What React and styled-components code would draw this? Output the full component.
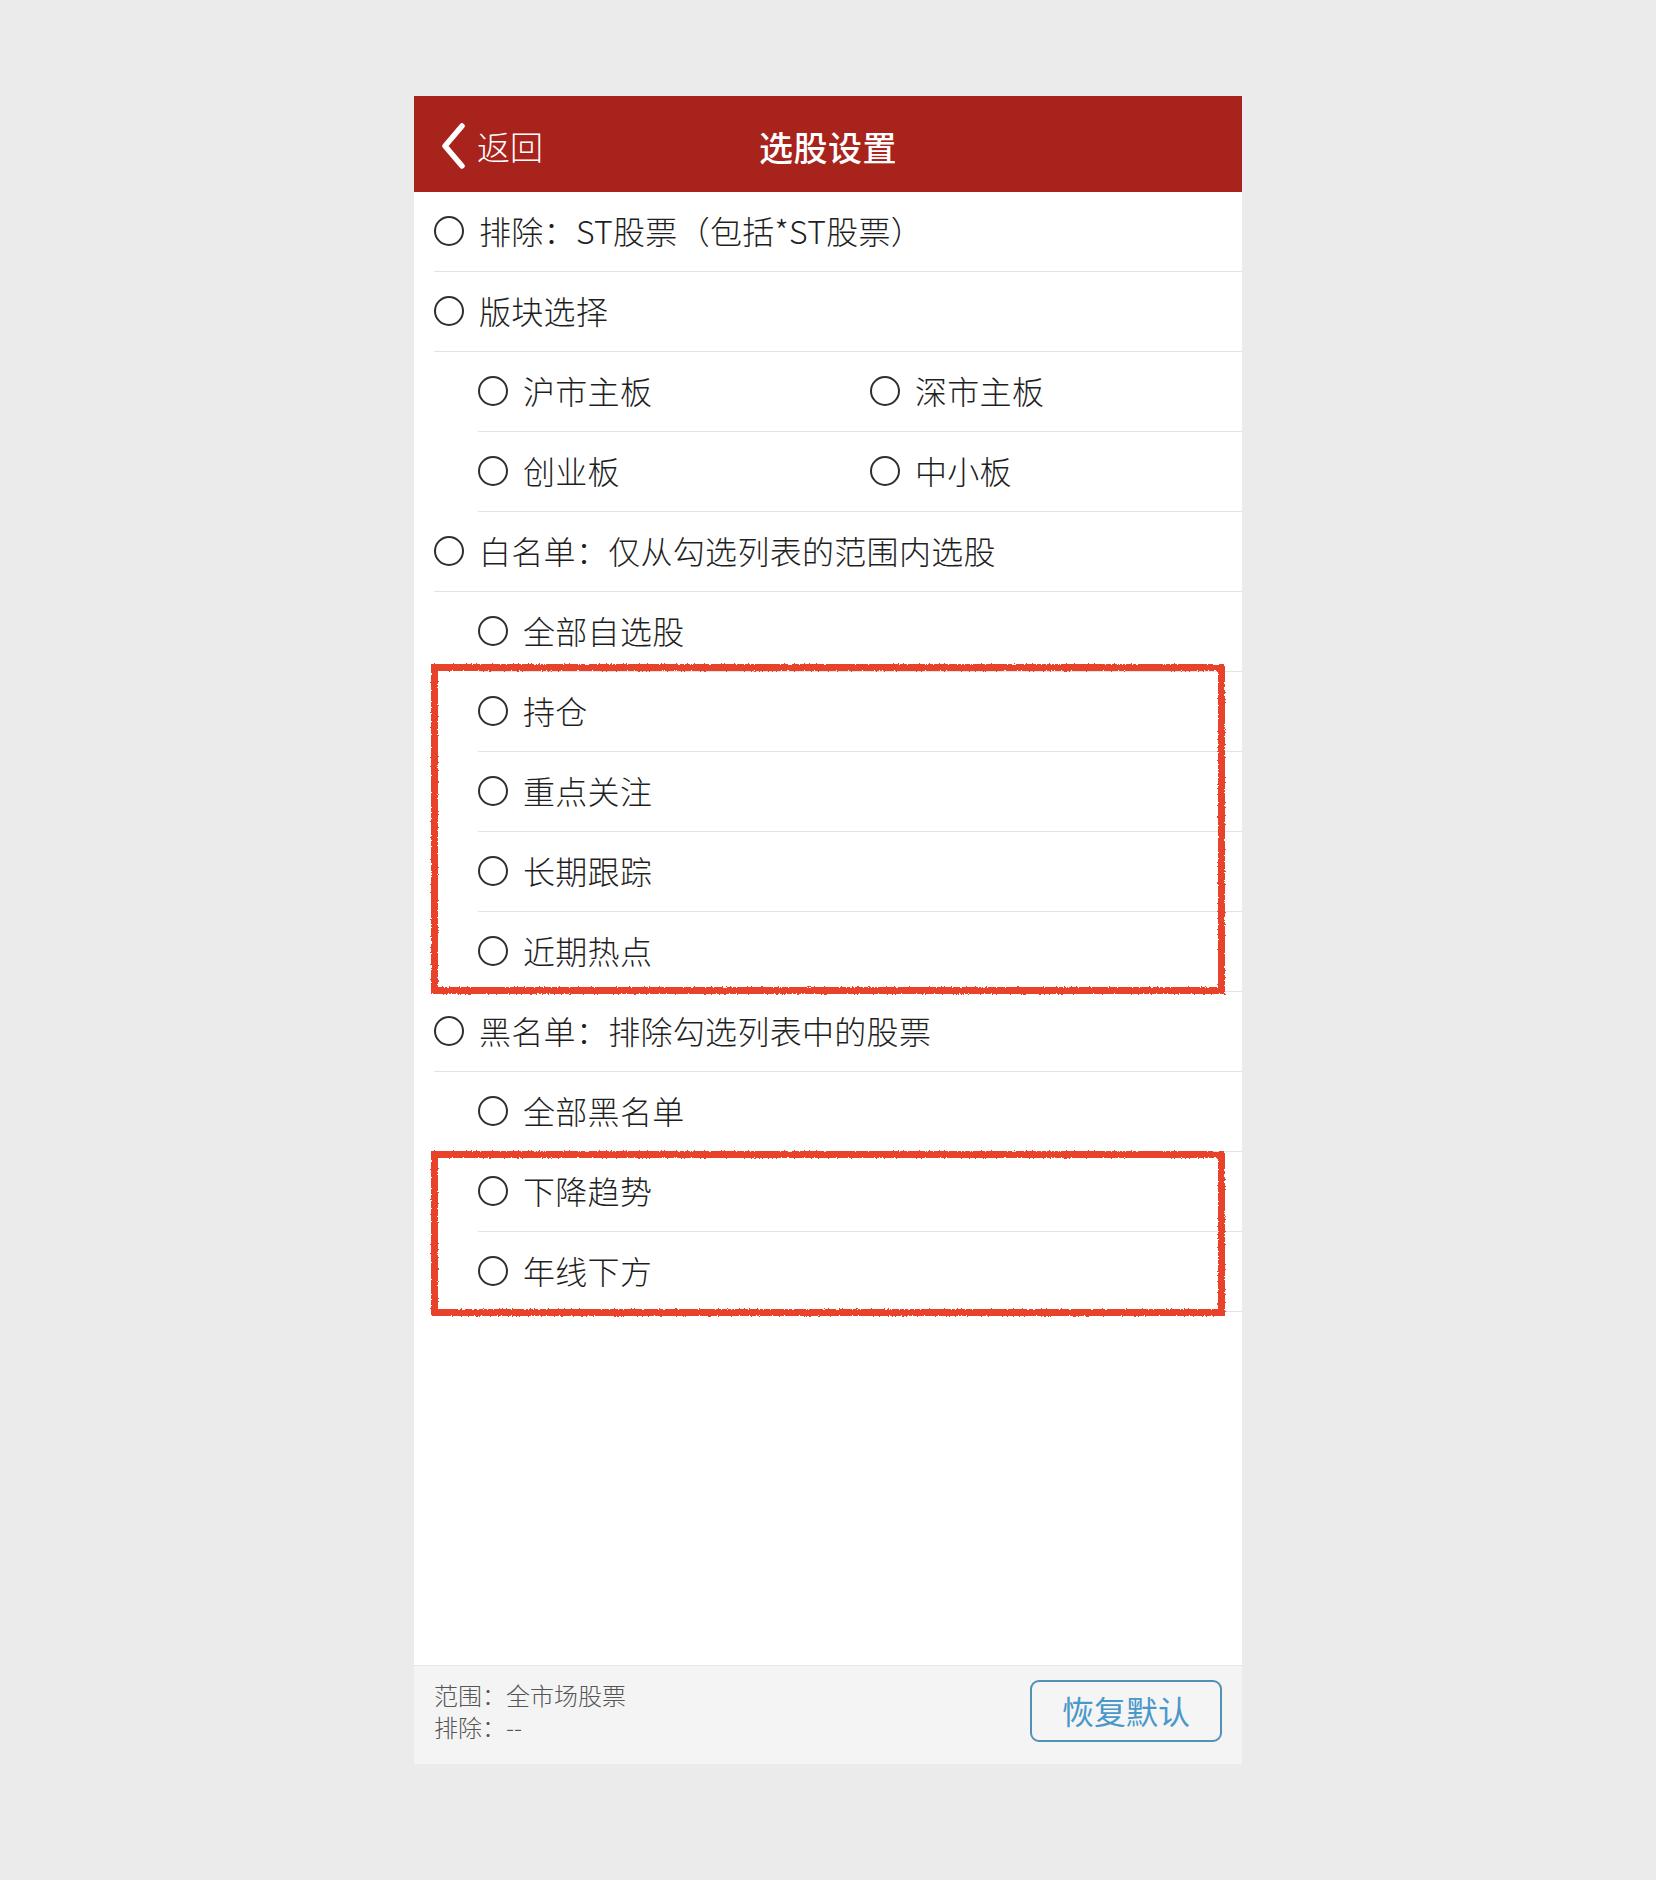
import React from "react";
import styled, { createGlobalStyle } from "styled-components";

const Global = createGlobalStyle`
  html, body { margin: 0; padding: 0; background: #ebebeb; }
  body { font-family: "Noto Sans CJK SC", "Noto Sans", sans-serif; }
  * { box-sizing: border-box; }
`;

const Page = styled.div`
  min-height: 1880px;
  padding-top: 96px;
  display: flex;
  justify-content: center;
`;

const Phone = styled.div`
  width: 828px;
  display: flex;
  flex-direction: column;
`;

const Header = styled.header`
  height: 96px;
  background: #a9231d;
  display: grid;
  grid-template-columns: 1fr auto 1fr;
  align-items: center;
  padding: 4px 25px 0 25px;
  color: #fff;
`;

const Back = styled.div`
  display: flex;
  align-items: center;
  gap: 10px;
  font-size: 33px;
  font-weight: 300;
  line-height: 1;
`;

const Title = styled.h1`
  margin: 0;
  font-size: 34px;
  font-weight: 500;
  letter-spacing: 0.5px;
`;

const Content = styled.main`
  height: 1473px;
  background: #fff;
  display: flex;
  flex-direction: column;
`;

const Row = styled.div`
  height: 80px;
  margin-left: ${(p) => (p.$sub ? 64 : 20)}px;
  padding-bottom: 3px;
  border-bottom: 1px solid #e3e3e3;
  display: ${(p) => (p.$cols ? "grid" : "flex")};
  grid-template-columns: 392px 1fr;
  align-items: center;
`;

const Option = styled.label`
  display: flex;
  align-items: center;
  gap: 15px;
  font-size: 32px;
  font-weight: 300;
  color: #1f1f1f;
  line-height: 1;
  letter-spacing: 0.3px;
`;

const Radio = styled.span`
  width: 30px;
  height: 30px;
  margin-top: 2px;
  border-radius: 50%;
  border: 2.5px solid #2e2e2e;
  flex-shrink: 0;
`;

const Highlight = styled.div`
  position: relative;
  display: flex;
  flex-direction: column;
  &::after {
    content: "";
    position: absolute;
    left: 17px;
    right: 17px;
    top: ${(p) => p.$top}px;
    bottom: ${(p) => p.$bottom}px;
    border: 7px solid #e8432b;
    filter: url(#rough-edge);
    pointer-events: none;
  }
`;

const Footer = styled.footer`
  height: 99px;
  background: #f4f4f4;
  border-top: 1px solid #e6e6e6;
  display: flex;
  align-items: center;
  justify-content: space-between;
  padding: 0 20px 8px 20px;
`;

const Summary = styled.div`
  display: flex;
  flex-direction: column;
  font-size: 24px;
  font-weight: 300;
  line-height: 32px;
  color: #555;
`;

const ResetButton = styled.button`
  width: 192px;
  height: 62px;
  border: 2.5px solid #5190b7;
  border-radius: 9px;
  background: #f5f5f6;
  color: #4a98c8;
  font-family: inherit;
  font-size: 32px;
  font-weight: 400;
  padding: 0 0 3px 0;
`;

const Defs = styled.svg`
  position: absolute;
  width: 0;
  height: 0;
`;

const Opt = ({ children }) => (
  <Option>
    <Radio />
    {children}
  </Option>
);

export default function App() {
  return (
    <>
      <Global />
      <Defs aria-hidden="true">
        <filter id="rough-edge">
          <feTurbulence type="fractalNoise" baseFrequency="0.6" numOctaves="2" seed="3" />
          <feDisplacementMap in="SourceGraphic" scale="3" />
        </filter>
      </Defs>
      <Page>
        <Phone>
          <Header>
            <Back>
              <svg width="28" height="46" viewBox="0 0 28 46">
                <polyline
                  points="23,3 6,23 23,43"
                  fill="none"
                  stroke="#fff"
                  strokeWidth="5.5"
                  strokeLinecap="round"
                  strokeLinejoin="round"
                />
              </svg>
              <span>返回</span>
            </Back>
            <Title>选股设置</Title>
            <div />
          </Header>
          <Content>
            <Row>
              <Opt>排除：ST股票（包括*ST股票）</Opt>
            </Row>
            <Row>
              <Opt>版块选择</Opt>
            </Row>
            <Row $sub $cols>
              <Opt>沪市主板</Opt>
              <Opt>深市主板</Opt>
            </Row>
            <Row $sub $cols>
              <Opt>创业板</Opt>
              <Opt>中小板</Opt>
            </Row>
            <Row>
              <Opt>白名单：仅从勾选列表的范围内选股</Opt>
            </Row>
            <Row $sub>
              <Opt>全部自选股</Opt>
            </Row>
            <Highlight $top={-8} $bottom={-2}>
              <Row $sub>
                <Opt>持仓</Opt>
              </Row>
              <Row $sub>
                <Opt>重点关注</Opt>
              </Row>
              <Row $sub>
                <Opt>长期跟踪</Opt>
              </Row>
              <Row $sub>
                <Opt>近期热点</Opt>
              </Row>
            </Highlight>
            <Row>
              <Opt>黑名单：排除勾选列表中的股票</Opt>
            </Row>
            <Row $sub>
              <Opt>全部黑名单</Opt>
            </Row>
            <Highlight $top={-1} $bottom={-4}>
              <Row $sub>
                <Opt>下降趋势</Opt>
              </Row>
              <Row $sub>
                <Opt>年线下方</Opt>
              </Row>
            </Highlight>
          </Content>
          <Footer>
            <Summary>
              <span>范围：全市场股票</span>
              <span>排除：--</span>
            </Summary>
            <ResetButton>恢复默认</ResetButton>
          </Footer>
        </Phone>
      </Page>
    </>
  );
}
